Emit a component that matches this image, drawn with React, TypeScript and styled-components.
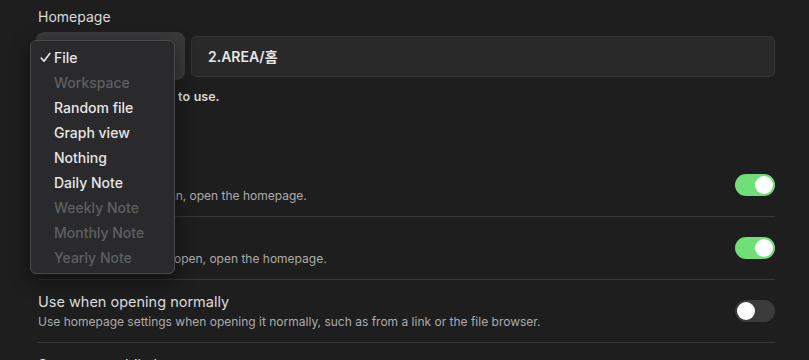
import React from 'react';
import styled, { createGlobalStyle } from 'styled-components';

const GlobalStyle = createGlobalStyle`
  html, body {
    margin: 0;
    padding: 0;
    background: #1e1e1e;
    font-family: Inter, "Noto Sans", "Noto Sans CJK KR", sans-serif;
    -webkit-font-smoothing: antialiased;
  }
`;

const Page = styled.div`
  position: relative;
  width: 809px;
  height: 360px;
  overflow: hidden;
  background: #1e1e1e;
  padding: 8px 34px 0 38px;
  box-sizing: border-box;
`;

const Title = styled.div`
  color: #dadada;
  font-size: 14px;
  line-height: 18px;
`;

const ControlRow = styled.div`
  display: flex;
  align-items: center;
  gap: 6px;
  margin: 6px 0 0 -2px;
`;

const SelectButton = styled.div`
  width: 149px;
  height: 48px;
  border-radius: 8px;
  background: #3a3a3a;
  flex-shrink: 0;
`;

const PathInput = styled.div`
  flex: 1;
  height: 41px;
  box-sizing: border-box;
  border: 1px solid #353535;
  border-radius: 5px;
  background: #292929;
  display: flex;
  align-items: center;
  padding-left: 16px;
  color: #e6e6e6;
  font-size: 14px;
  font-weight: 600;
`;

const StrongDesc = styled.div`
  margin-top: 9px;
  color: #d8d8d8;
  font-size: 12.5px;
  font-weight: 600;
  line-height: 16px;
  word-spacing: 0.5px;
`;

const Heading = styled.div`
  margin-top: 30px;
  color: #dadada;
  font-size: 14px;
  line-height: 18px;
`;

const Row = styled.div<{ divided?: boolean }>`
  display: flex;
  align-items: center;
  justify-content: space-between;
  height: 63px;
  box-sizing: border-box;
  border-top: ${(p) => (p.divided ? '1px solid #363636' : 'none')};
`;

const Info = styled.div`
  display: flex;
  flex-direction: column;
  gap: 3px;
`;

const Name = styled.div`
  color: #dadada;
  font-size: 14.5px;
  line-height: 19px;
`;

const Desc = styled.div`
  color: #ababab;
  font-size: 12px;
  line-height: 16px;
`;

const Track = styled.div<{ on: boolean }>`
  width: 40px;
  height: 22px;
  border-radius: 11px;
  background: ${(p) => (p.on ? '#6fdf78' : '#3b3b3b')};
  display: flex;
  align-items: center;
  justify-content: ${(p) => (p.on ? 'flex-end' : 'flex-start')};
  padding: 0 2px;
  box-sizing: border-box;
  flex-shrink: 0;
`;

const Knob = styled.div`
  width: 18px;
  height: 18px;
  border-radius: 50%;
  background: #ffffff;
`;

const Menu = styled.div`
  position: absolute;
  left: 30px;
  top: 40px;
  width: 145px;
  height: 234px;
  box-sizing: border-box;
  background: #2a2a2c;
  border: 1px solid #4a4a4c;
  border-radius: 6px;
  box-shadow: 0 6px 18px rgba(0, 0, 0, 0.55);
  padding: 4px 0 0;
  display: flex;
  flex-direction: column;
`;

const MenuItem = styled.div<{ disabled?: boolean }>`
  height: 25px;
  display: flex;
  align-items: center;
  padding-left: 23px;
  position: relative;
  font-size: 14px;
  font-weight: 500;
  color: ${(p) => (p.disabled ? '#5f5f61' : '#e6e6e6')};
`;

const Check = styled.svg`
  position: absolute;
  left: 9px;
  top: 7px;
`;

const Toggle = ({ on }: { on: boolean }) => (
  <Track on={on}>
    <Knob />
  </Track>
);

const menuItems = [
  { label: 'File', checked: true },
  { label: 'Workspace', disabled: true },
  { label: 'Random file' },
  { label: 'Graph view' },
  { label: 'Nothing' },
  { label: 'Daily Note' },
  { label: 'Weekly Note', disabled: true },
  { label: 'Monthly Note', disabled: true },
  { label: 'Yearly Note', disabled: true },
];

const settings = [
  { name: 'Open on startup', desc: 'When launching Obsidian, open the homepage.', on: true },
  { name: 'Open when empty', desc: 'When there are no tabs open, open the homepage.', on: true },
  {
    name: 'Use when opening normally',
    desc: 'Use homepage settings when opening it normally, such as from a link or the file browser.',
    on: false,
  },
];

const App = () => (
  <Page>
    <GlobalStyle />
    <Title>Homepage</Title>
    <ControlRow>
      <SelectButton />
      <PathInput>2.AREA/홈</PathInput>
    </ControlRow>
    <StrongDesc>Enter a note or canvas to use.</StrongDesc>
    <Heading>Opening</Heading>
    {settings.map((s, i) => (
      <Row key={s.name} divided={i > 0}>
        <Info>
          <Name>{s.name}</Name>
          <Desc>{s.desc}</Desc>
        </Info>
        <Toggle on={s.on} />
      </Row>
    ))}
    <Row divided>
      <Info>
        <Name>Separate mobile homepage</Name>
        <Desc>&nbsp;</Desc>
      </Info>
    </Row>
    <Menu>
      {menuItems.map((m) => (
        <MenuItem key={m.label} disabled={m.disabled}>
          {m.checked && (
            <Check width="11" height="11" viewBox="0 0 11 11">
              <path d="M1.2 6 L4 9.2 L9.8 1.4" fill="none" stroke="#e6e6e6" strokeWidth="1.6" strokeLinecap="round" strokeLinejoin="round" />
            </Check>
          )}
          {m.label}
        </MenuItem>
      ))}
    </Menu>
  </Page>
);

export default App;
